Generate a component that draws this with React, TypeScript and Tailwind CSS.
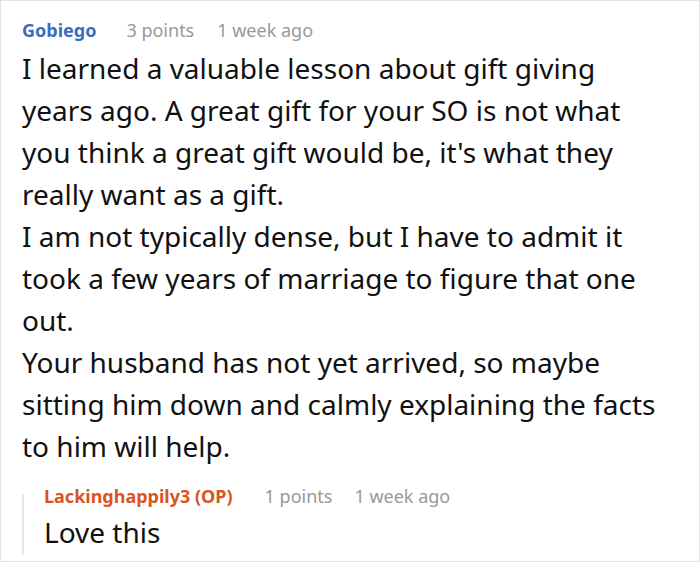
export default function App() {
  return (
    <div className="w-[700px] h-[562px] bg-white border border-[#e2e2e2] font-['Noto_Sans',sans-serif] pl-[21px] pr-[39px] pt-[16px] overflow-hidden">
      <div className="flex items-baseline text-[18px] leading-[26px]">
        <span className="font-bold text-[#3b6cbf]">Gobiego</span>
        <span className="ml-[30px] text-[#999999]">3 points</span>
        <span className="ml-[23px] text-[#999999]">1 week ago</span>
      </div>
      <div className="text-[28px] leading-[42px] text-[#111111] mt-[4px]">
        <p>I learned a valuable lesson about gift giving years ago. A great gift for your SO is not what you think a great gift would be, it's what they really want as a gift.</p>
        <p>I am not typically dense, but I have to admit it took a few years of marriage to figure that one out.</p>
        <p>Your husband has not yet arrived, so maybe sitting him down and calmly explaining the facts to him will help.</p>
      </div>
      <div className="mt-[16px] flex">
        <div className="w-[2px] bg-[#e6e6e6] mt-[11px] mb-[-5px]" />
        <div className="pl-[20px]">
          <div className="flex items-baseline text-[18px] leading-[26px]">
            <span className="font-bold text-[#d9541e]">Lackinghappily3 (OP)</span>
            <span className="ml-[32px] text-[#999999]">1 points</span>
            <span className="ml-[22px] text-[#999999]">1 week ago</span>
          </div>
          <div className="text-[28px] leading-[36px] text-[#111111] mt-[5px]">Love this</div>
        </div>
      </div>
    </div>
  );
}
